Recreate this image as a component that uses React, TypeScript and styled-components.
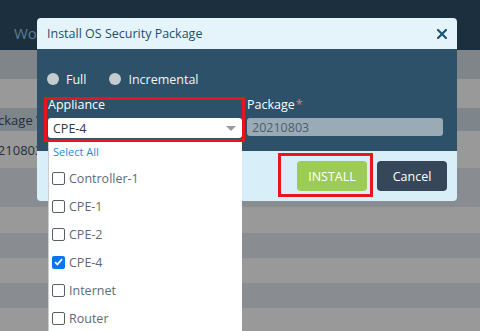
import React from "react";
import styled, { createGlobalStyle } from "styled-components";

const GlobalStyle = createGlobalStyle`
    html, body {
        margin: 0;
        padding: 0;
        background: #999a9b;
    }
    body {
        font-family: "Open Sans", "Liberation Sans", sans-serif;
    }
`;

const Page = styled.div`
    position: relative;
    width: 480px;
    height: 331px;
    overflow: hidden;
    background: #999999;
`;

const TopBar = styled.div`
    height: 50px;
    background: #1c2f3f;
    display: flex;
    align-items: center;
    padding: 0 14px;
    box-sizing: border-box;
`;

const TopTitle = styled.span`
    color: #5b7d93;
    font-size: 15px;
    margin-top: 16px;
`;

const TabStrip = styled.div`
    height: 29px;
    background: #80858a;
`;

const Toolbar = styled.div`
    height: 29px;
    background: #999999;
`;

const Table = styled.div`
    display: flex;
    flex-direction: column;
    margin-left: -17px;
`;

const Row = styled.div<{ $dark?: boolean; $h: number }>`
    height: ${(p) => p.$h}px;
    background: ${(p) => (p.$dark ? "#898c90" : "#999999")};
    display: flex;
    align-items: center;
    font-size: 13px;
    color: #232f3a;
`;

const HeaderRow = styled(Row)`
    background: #7e858b;
`;

const Overlay = styled.div`
    position: absolute;
    inset: 0;
`;

const Modal = styled.div`
    position: absolute;
    left: 37px;
    top: 18px;
    width: 420px;
    border-radius: 4px;
    display: flex;
    flex-direction: column;
`;

const ModalHeader = styled.div`
    height: 31px;
    background: #e5f4fb;
    border-radius: 4px 4px 0 0;
    display: flex;
    align-items: center;
    justify-content: space-between;
    padding: 0 10px;
    box-sizing: border-box;
`;

const ModalTitle = styled.span`
    color: #1f4e6b;
    font-size: 12.5px;
`;

const CloseButton = styled.button`
    border: none;
    background: none;
    padding: 0;
    width: 10px;
    height: 10px;
    display: flex;
    cursor: pointer;
`;

const ModalBody = styled.div`
    height: 102px;
    background: #2c5169;
    padding: 23px 14px 0 11px;
    box-sizing: border-box;
    display: flex;
    flex-direction: column;
`;

const RadioRow = styled.div`
    display: flex;
    align-items: center;
    gap: 24px;
    height: 14px;
`;

const RadioLabel = styled.label`
    display: flex;
    align-items: center;
    gap: 7px;
    color: #f2f5f7;
    font-size: 12.5px;
`;

const RadioDot = styled.span`
    width: 12px;
    height: 12px;
    border-radius: 50%;
    background: #c6cbd0;
    margin-left: -1px;
`;

const Fields = styled.div`
    display: flex;
    gap: 5px;
    margin-top: 10px;
`;

const Field = styled.div<{ $w: number }>`
    position: relative;
    width: ${(p) => p.$w}px;
    display: flex;
    flex-direction: column;
`;

const FieldLabel = styled.div`
    color: #ffffff;
    font-size: 12.5px;
    height: 22px;
    line-height: 18px;
`;

const Required = styled.span`
    color: #e0718a;
    margin-left: 1px;
`;

const SelectBox = styled.div`
    height: 20px;
    background: #ffffff;
    border-radius: 3px;
    display: flex;
    align-items: center;
    justify-content: space-between;
    padding: 0 6px 0 5px;
    box-sizing: border-box;
    color: #2d3b48;
    font-size: 12.5px;
`;

const Caret = styled.span`
    width: 0;
    height: 0;
    border-left: 5px solid transparent;
    border-right: 5px solid transparent;
    border-top: 5px solid #9a9a9a;
`;

const TextInput = styled.div`
    height: 18px;
    background: #9aabb6;
    border-radius: 3px;
    display: flex;
    align-items: center;
    padding: 0 5px;
    color: #4b5e6d;
    font-size: 12.5px;
`;

const Dropdown = styled.div`
    position: absolute;
    left: 0;
    top: 43px;
    width: 194px;
    background: #ffffff;
    border-left: 1px solid #c9ced2;
    box-sizing: border-box;
    z-index: 2;
    display: flex;
    flex-direction: column;
    padding-bottom: 40px;
`;

const SelectAll = styled.div`
    height: 25px;
    display: flex;
    align-items: center;
    padding-left: 4px;
    color: #1a8ce0;
    font-size: 11px;
`;

const Option = styled.div`
    height: 28px;
    display: flex;
    align-items: center;
    gap: 4px;
    padding-left: 3px;
    color: #5c6b78;
    font-size: 12.5px;
`;

const Check = styled.span<{ $on?: boolean }>`
    width: 13px;
    height: 13px;
    box-sizing: border-box;
    border-radius: 2px;
    border: ${(p) => (p.$on ? "none" : "1.5px solid #5a5f64")};
    background: ${(p) => (p.$on ? "#0b75f0" : "#ffffff")};
    display: flex;
    align-items: center;
    justify-content: center;
`;

const ModalFooter = styled.div`
    height: 50px;
    background: #d8eef9;
    border-radius: 0 0 4px 4px;
    display: flex;
    justify-content: flex-end;
    align-items: flex-start;
    gap: 10px;
    padding: 10px 10px 0 0;
    box-sizing: border-box;
`;

const ActionButton = styled.button<{ $primary?: boolean }>`
    width: 70px;
    height: 30px;
    border: none;
    border-radius: 4px;
    background: ${(p) => (p.$primary ? "#9ccc55" : "#37475a")};
    color: #ffffff;
    font-family: "Open Sans", "Liberation Sans", sans-serif;
    font-size: 12.5px;
    cursor: pointer;
`;

const Highlight = styled.div<{ $l: number; $t: number; $w: number; $h: number }>`
    position: absolute;
    left: ${(p) => p.$l}px;
    top: ${(p) => p.$t}px;
    width: ${(p) => p.$w}px;
    height: ${(p) => p.$h}px;
    border: 3px solid #e8141f;
    box-sizing: border-box;
    pointer-events: none;
    z-index: 3;
`;

const OPTIONS = [
    ["Controller-1", false],
    ["CPE-1", false],
    ["CPE-2", false],
    ["CPE-4", true],
    ["Internet", false],
    ["Router", false],
] as const;

const App: React.FC = () => {
    return (
        <>
            <GlobalStyle />
            <Page>
                <TopBar>
                    <TopTitle>Workflows</TopTitle>
                </TopBar>
                <TabStrip />
                <Toolbar />
                <Table>
                    <HeaderRow $h={23}>Package Version</HeaderRow>
                    <Row $h={37}>20210803</Row>
                    <Row $h={39} $dark />
                    <Row $h={26} />
                    <Row $h={25} $dark />
                    <Row $h={25} />
                    <Row $h={25} $dark />
                    <Row $h={25} />
                </Table>

                <Overlay>
                    <Modal>
                        <ModalHeader>
                            <ModalTitle>Install OS Security Package</ModalTitle>
                            <CloseButton aria-label="Close">
                                <svg width="10" height="10" viewBox="0 0 10 10">
                                    <path
                                        d="M1 1 L9 9 M9 1 L1 9"
                                        stroke="#1b5676"
                                        strokeWidth="2.2"
                                        strokeLinecap="square"
                                    />
                                </svg>
                            </CloseButton>
                        </ModalHeader>
                        <ModalBody>
                            <RadioRow>
                                <RadioLabel>
                                    <RadioDot />
                                    Full
                                </RadioLabel>
                                <RadioLabel>
                                    <RadioDot />
                                    Incremental
                                </RadioLabel>
                            </RadioRow>
                            <Fields>
                                <Field $w={194}>
                                    <FieldLabel>Appliance</FieldLabel>
                                    <SelectBox>
                                        CPE-4
                                        <Caret />
                                    </SelectBox>
                                    <Dropdown>
                                        <SelectAll>Select All</SelectAll>
                                        {OPTIONS.map(([name, on]) => (
                                            <Option key={name}>
                                                <Check $on={on}>
                                                    {on && (
                                                        <svg width="9" height="8" viewBox="0 0 9 8">
                                                            <path
                                                                d="M1 4.2 L3.4 6.5 L8 1.2"
                                                                stroke="#ffffff"
                                                                strokeWidth="1.8"
                                                                fill="none"
                                                            />
                                                        </svg>
                                                    )}
                                                </Check>
                                                {name}
                                            </Option>
                                        ))}
                                    </Dropdown>
                                </Field>
                                <Field $w={196}>
                                    <FieldLabel>
                                        Package<Required>*</Required>
                                    </FieldLabel>
                                    <TextInput>20210803</TextInput>
                                </Field>
                            </Fields>
                        </ModalBody>
                        <ModalFooter>
                            <ActionButton $primary>INSTALL</ActionButton>
                            <ActionButton>Cancel</ActionButton>
                        </ModalFooter>
                    </Modal>
                    <Highlight $l={44} $t={97} $w={201} $h={45} />
                    <Highlight $l={278} $t={153} $w={95} $h={44} />
                </Overlay>
            </Page>
        </>
    );
};

export default App;
